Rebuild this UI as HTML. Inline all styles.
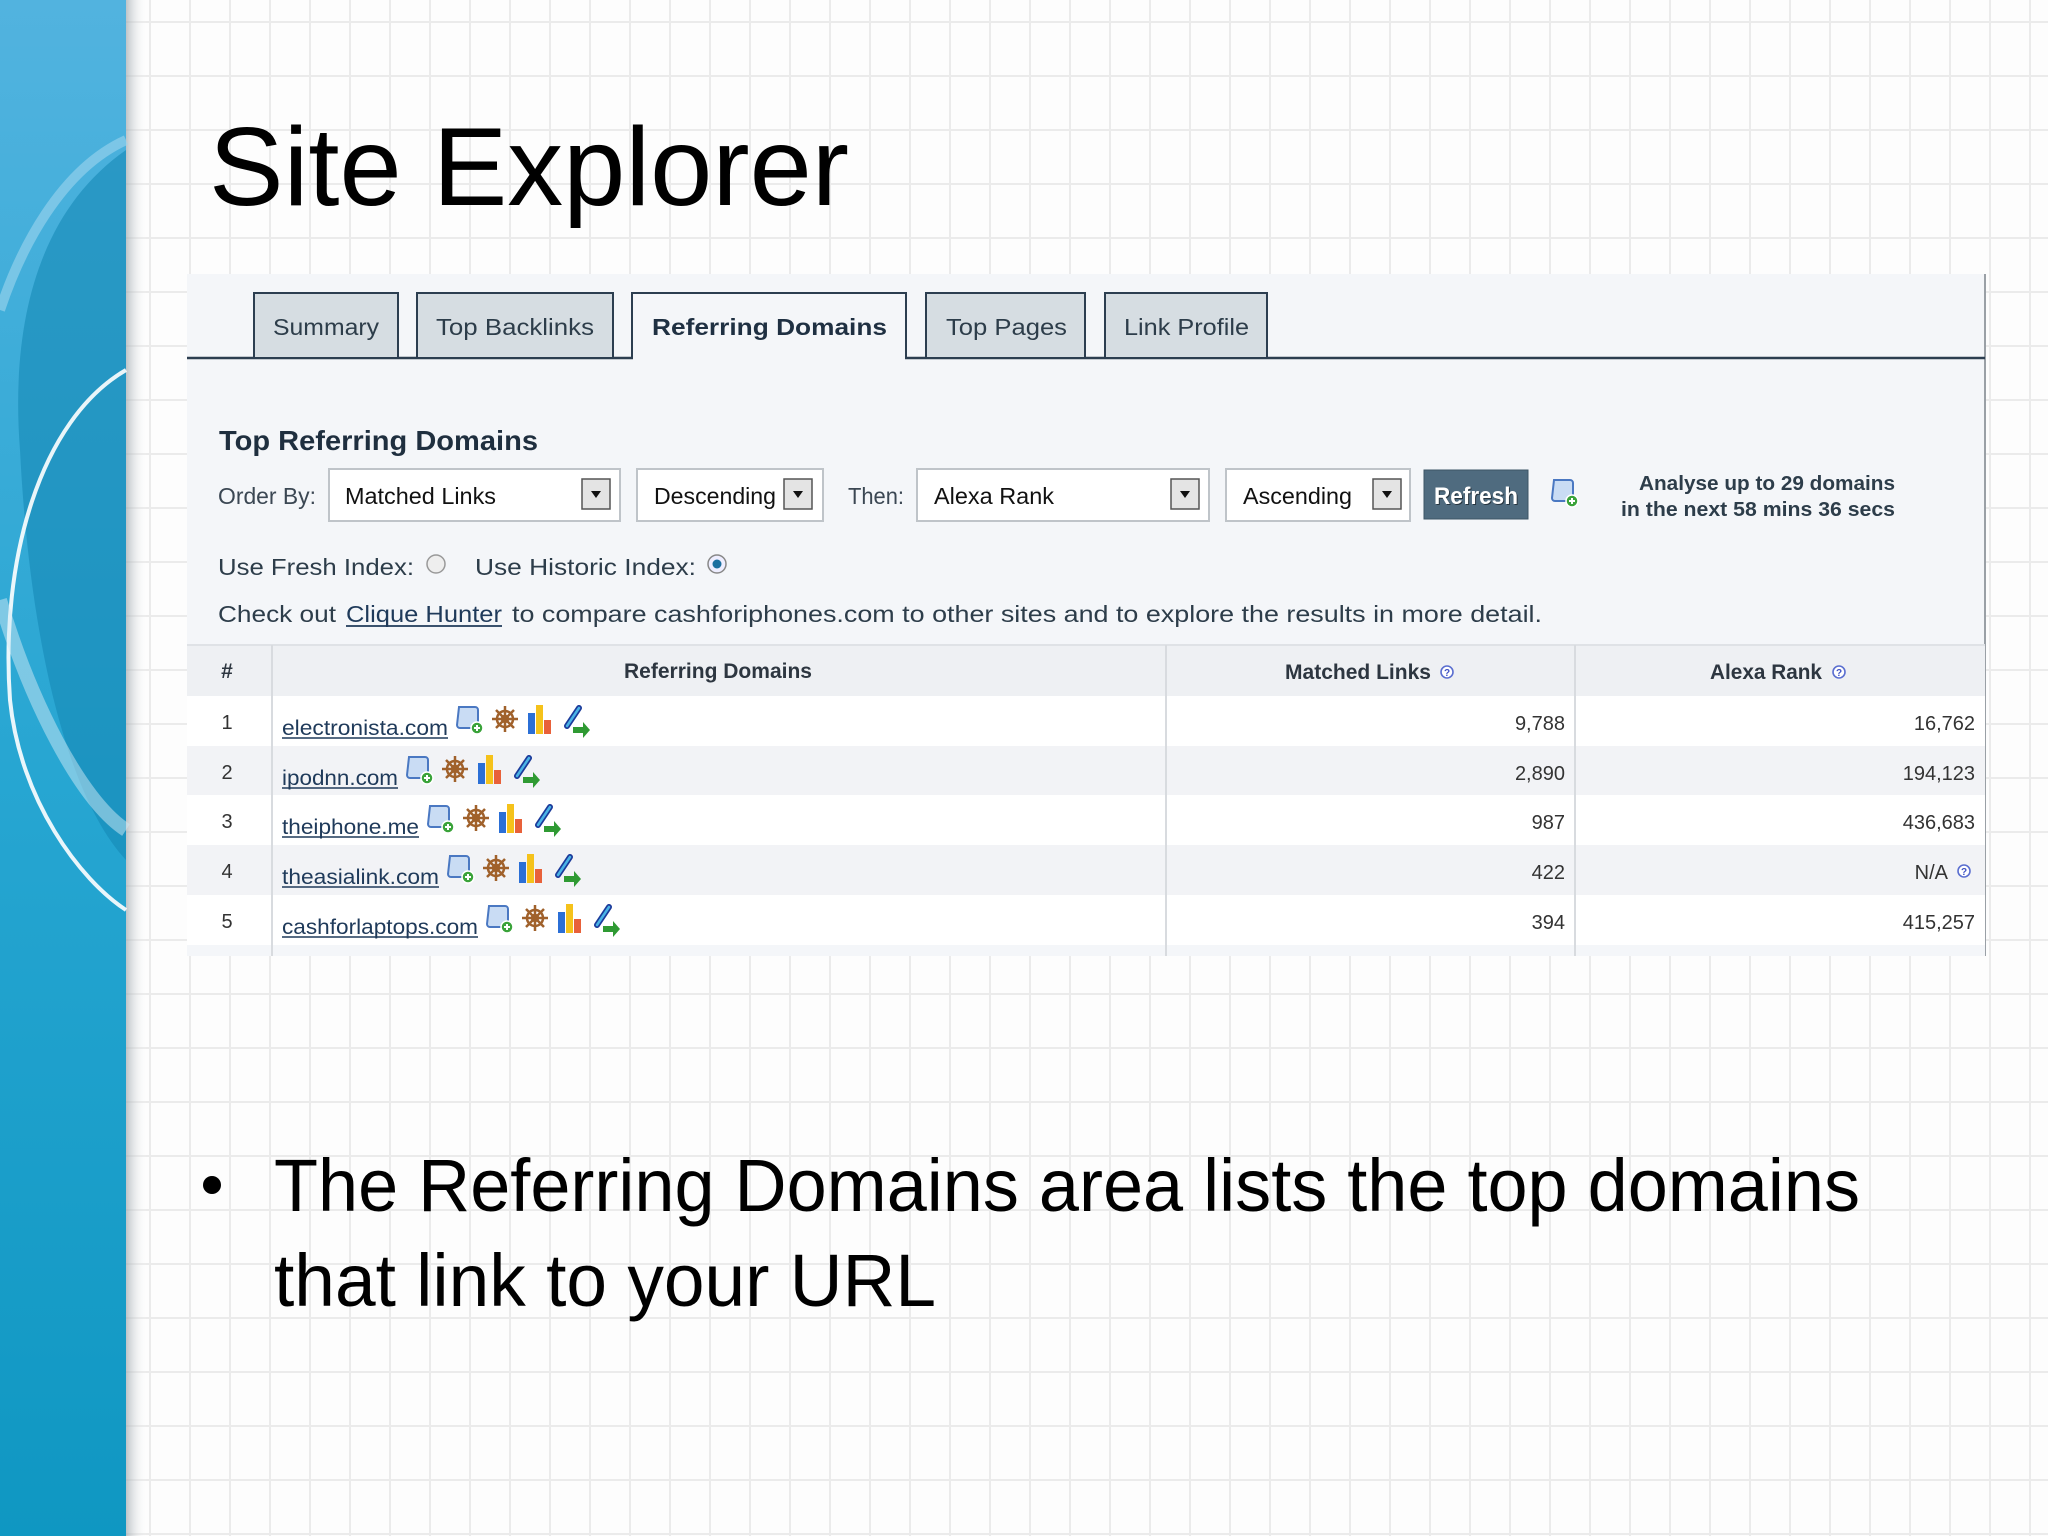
<!DOCTYPE html>
<html><head><meta charset="utf-8"><style>
html,body{margin:0;padding:0;width:2048px;height:1536px;overflow:hidden;background:#fff}
svg{display:block}
</style></head><body>
<svg width="2048" height="1536" viewBox="0 0 2048 1536" xmlns="http://www.w3.org/2000/svg" font-family="Liberation Sans, Arial, sans-serif">
<defs>
<pattern id="grid" x="29" y="21" width="40" height="54" patternUnits="userSpaceOnUse">
<rect width="40" height="54" fill="#fdfdfd"/>
<rect x="0" y="0" width="2" height="54" fill="#ebebeb"/>
<rect x="0" y="0" width="40" height="2" fill="#ebebeb"/>
</pattern>
<linearGradient id="band" x1="0" y1="0" x2="0" y2="1">
<stop offset="0" stop-color="#52b3df"/><stop offset="0.5" stop-color="#27a6d2"/><stop offset="1" stop-color="#0f97c2"/>
</linearGradient>
<linearGradient id="shad" x1="0" y1="0" x2="1" y2="0">
<stop offset="0" stop-color="#9aa4aa" stop-opacity="0.7"/><stop offset="1" stop-color="#fff" stop-opacity="0"/>
</linearGradient>
<g id="scroll">
<path d="M3 4 h16 a3 3 0 0 1 3 3 v18 h-18 a3 3 0 0 1 -3 -3 z" fill="#c9dcf4" stroke="#4a78c2" stroke-width="2"/>
<circle cx="21" cy="25" r="6" fill="#3aa33a" stroke="#fff" stroke-width="1.5"/>
<path d="M18 25h6M21 22v6" stroke="#fff" stroke-width="2"/>
</g>
<g id="wheel" stroke="#a0612b" fill="none" stroke-width="2.5">
<circle cx="13" cy="16" r="8"/><circle cx="13" cy="16" r="3" fill="#d7a36b"/>
<path d="M13 3v26M0 16h26M4 7l18 18M22 7l-18 18"/>
</g>
<g id="bars">
<rect x="1" y="10" width="7" height="21" fill="#2b6fd6"/>
<rect x="9" y="2" width="7" height="29" fill="#f5c21b"/>
<rect x="17" y="17" width="7" height="14" fill="#e8613a"/>
</g>
<g id="link">
<path d="M6 24 l12 -18" stroke="#1b3a9a" stroke-width="6" stroke-linecap="round" fill="none"/>
<path d="M6 24 l12 -18" stroke="#4ab3e6" stroke-width="2.5" stroke-linecap="round" fill="none"/>
<path d="M12 25h10v-5l7 8-7 8v-5h-10z" fill="#2f9a33"/>
</g>
<g id="q"><circle cx="7" cy="7" r="6" fill="#fff" stroke="#5b6fd0" stroke-width="1.6"/><text x="7" y="11" font-size="10" text-anchor="middle" fill="#3f52c4" font-weight="bold">?</text></g>
<g id="arr"><rect x="0" y="0" width="28" height="30" fill="#e4e4e4" stroke="#555" stroke-width="1.5"/><path d="M9 12h10l-5 7z" fill="#111"/></g>
</defs>

<rect width="2048" height="1536" fill="url(#grid)"/>
<rect x="125" y="0" width="22" height="1536" fill="url(#shad)"/>
<rect x="0" y="0" width="126" height="1536" fill="url(#band)"/>
<path d="M126 150 C40 210 10 320 20 450 C30 650 70 800 126 860 Z" fill="#1688b6" opacity="0.6"/>
<path d="M126 140 C60 170 20 250 0 310" stroke="#9fd6ee" stroke-width="10" fill="none" opacity="0.6"/>
<path d="M126 370 C40 420 0 560 10 700 C20 800 80 880 126 910" stroke="#ffffff" stroke-width="4" fill="none" opacity="0.9"/>
<path d="M0 600 C30 700 80 800 126 830" stroke="#cfeaf6" stroke-width="14" fill="none" opacity="0.5"/>

<text x="209" y="205" font-size="111" fill="#000" textLength="640" lengthAdjust="spacingAndGlyphs">Site Explorer</text>

<rect x="187" y="274" width="1798" height="682" fill="#f4f6f9"/>
<line x1="1985" y1="274" x2="1985" y2="956" stroke="#9aa0a6" stroke-width="2"/>
<line x1="187" y1="358" x2="1985" y2="358" stroke="#2c3e50" stroke-width="2.5"/>
<g stroke="#2c3e50" stroke-width="2" fill="#d6dde2">
<rect x="254" y="293" width="144" height="65"/>
<rect x="417" y="293" width="196" height="65"/>
<rect x="926" y="293" width="159" height="65"/>
<rect x="1105" y="293" width="162" height="65"/>
</g>
<path d="M632 359 V293 H906 V359" fill="#f4f6f9" stroke="#2c3e50" stroke-width="2"/>
<rect x="633" y="356" width="272" height="5" fill="#f4f6f9"/>
<g font-size="23" fill="#2d3d4a">
<text x="273" y="335" textLength="106" lengthAdjust="spacingAndGlyphs">Summary</text>
<text x="436" y="335" textLength="158" lengthAdjust="spacingAndGlyphs">Top Backlinks</text>
<text x="652" y="335" textLength="235" lengthAdjust="spacingAndGlyphs" font-weight="bold" fill="#1f3042">Referring Domains</text>
<text x="946" y="335" textLength="121" lengthAdjust="spacingAndGlyphs">Top Pages</text>
<text x="1124" y="335" textLength="125" lengthAdjust="spacingAndGlyphs">Link Profile</text>
</g>

<text x="219" y="450" font-size="28" font-weight="bold" fill="#1f2f3f" textLength="319" lengthAdjust="spacingAndGlyphs">Top Referring Domains</text>

<g fill="#fff" stroke="#bfc4c9" stroke-width="2">
<rect x="329" y="469" width="291" height="52"/>
<rect x="637" y="469" width="186" height="52"/>
<rect x="917" y="469" width="292" height="52"/>
<rect x="1226" y="469" width="184" height="52"/>
</g>
<use href="#arr" x="582" y="479"/>
<use href="#arr" x="784" y="479"/>
<use href="#arr" x="1171" y="479"/>
<use href="#arr" x="1373" y="479"/>
<g font-size="23" fill="#111">
<text x="218" y="504" fill="#3b4753" textLength="98" lengthAdjust="spacingAndGlyphs">Order By:</text>
<text x="345" y="504" textLength="151" lengthAdjust="spacingAndGlyphs">Matched Links</text>
<text x="654" y="504" textLength="122" lengthAdjust="spacingAndGlyphs">Descending</text>
<text x="848" y="504" fill="#3b4753" textLength="56" lengthAdjust="spacingAndGlyphs">Then:</text>
<text x="934" y="504" textLength="120" lengthAdjust="spacingAndGlyphs">Alexa Rank</text>
<text x="1243" y="504" textLength="109" lengthAdjust="spacingAndGlyphs">Ascending</text>
</g>
<rect x="1424" y="470" width="104" height="49" fill="#4f6b7f" stroke="#3d5566" stroke-width="1"/>
<text x="1435" y="505" font-size="24" font-weight="bold" fill="#000" opacity="0.5" textLength="84" lengthAdjust="spacingAndGlyphs">Refresh</text>
<text x="1434" y="504" font-size="24" font-weight="bold" fill="#fff" textLength="84" lengthAdjust="spacingAndGlyphs">Refresh</text>
<use href="#scroll" x="1551" y="476"/>
<g font-size="20" font-weight="bold" fill="#2d3d4a">
<text x="1639" y="490" textLength="256" lengthAdjust="spacingAndGlyphs">Analyse up to 29 domains</text>
<text x="1621" y="516" textLength="274" lengthAdjust="spacingAndGlyphs">in the next 58 mins 36 secs</text>
</g>

<g font-size="23" fill="#2d3d4a">
<text x="218" y="575" textLength="196" lengthAdjust="spacingAndGlyphs">Use Fresh Index:</text>
<text x="475" y="575" textLength="221" lengthAdjust="spacingAndGlyphs">Use Historic Index:</text>
</g>
<circle cx="436" cy="564" r="9" fill="#eee" stroke="#999" stroke-width="1.5"/>
<circle cx="717" cy="564" r="9" fill="#eef" stroke="#888" stroke-width="1.5"/>
<circle cx="717" cy="564" r="4.5" fill="#1a6fa0"/>
<g font-size="23" fill="#2d3d4a">
<text x="218" y="622" textLength="118" lengthAdjust="spacingAndGlyphs">Check out</text>
<text x="346" y="622" textLength="156" lengthAdjust="spacingAndGlyphs" fill="#1f3a5a">Clique Hunter</text>
<text x="512" y="622" textLength="1030" lengthAdjust="spacingAndGlyphs">to compare cashforiphones.com to other sites and to explore the results in more detail.</text>
</g>
<line x1="346" y1="626" x2="502" y2="626" stroke="#1f3a5a" stroke-width="1.8"/>

<rect x="187" y="645" width="1798" height="51" fill="#eef0f3"/>
<line x1="187" y1="645" x2="1985" y2="645" stroke="#dfe2e6" stroke-width="2"/>
<rect x="187" y="696" width="1798" height="50" fill="#ffffff"/>
<rect x="187" y="746" width="1798" height="49" fill="#f2f3f6"/>
<rect x="187" y="795" width="1798" height="50" fill="#ffffff"/>
<rect x="187" y="845" width="1798" height="50" fill="#f2f3f6"/>
<rect x="187" y="895" width="1798" height="50" fill="#ffffff"/>
<rect x="187" y="945" width="1798" height="11" fill="#f4f6f9"/>
<g stroke="#d8dbdf" stroke-width="2">
<line x1="272" y1="645" x2="272" y2="956"/>
<line x1="1166" y1="645" x2="1166" y2="956"/>
<line x1="1575" y1="645" x2="1575" y2="956"/>
</g>
<g font-size="21" font-weight="bold" fill="#2d3640">
<text x="227" y="678" text-anchor="middle">#</text>
<text x="624" y="678" textLength="188" lengthAdjust="spacingAndGlyphs">Referring Domains</text>
<text x="1285" y="679" textLength="146" lengthAdjust="spacingAndGlyphs">Matched Links</text>
<text x="1710" y="679" textLength="112" lengthAdjust="spacingAndGlyphs">Alexa Rank</text>
</g>
<use href="#q" x="1440" y="665"/>
<use href="#q" x="1832" y="665"/>

<g font-size="20" fill="#333" text-anchor="middle">
<text x="227" y="729">1</text><text x="227" y="779">2</text><text x="227" y="828">3</text><text x="227" y="878">4</text><text x="227" y="928">5</text>
</g>
<g font-size="21" fill="#1f3a5a">
<text x="282" y="735" textLength="166" lengthAdjust="spacingAndGlyphs">electronista.com</text>
<text x="282" y="785" textLength="116" lengthAdjust="spacingAndGlyphs">ipodnn.com</text>
<text x="282" y="834" textLength="137" lengthAdjust="spacingAndGlyphs">theiphone.me</text>
<text x="282" y="884" textLength="157" lengthAdjust="spacingAndGlyphs">theasialink.com</text>
<text x="282" y="934" textLength="196" lengthAdjust="spacingAndGlyphs">cashforlaptops.com</text>
</g>
<g stroke="#1f3a5a" stroke-width="1.6">
<line x1="282" y1="738" x2="448" y2="738"/>
<line x1="282" y1="788" x2="398" y2="788"/>
<line x1="282" y1="837" x2="419" y2="837"/>
<line x1="282" y1="887" x2="439" y2="887"/>
<line x1="282" y1="937" x2="478" y2="937"/>
</g>
<g>
<use href="#scroll" x="456" y="703"/><use href="#wheel" x="492" y="703"/><use href="#bars" x="527" y="703"/><use href="#link" x="561" y="702"/>
<use href="#scroll" x="406" y="753"/><use href="#wheel" x="442" y="753"/><use href="#bars" x="477" y="753"/><use href="#link" x="511" y="752"/>
<use href="#scroll" x="427" y="802"/><use href="#wheel" x="463" y="802"/><use href="#bars" x="498" y="802"/><use href="#link" x="532" y="801"/>
<use href="#scroll" x="447" y="852"/><use href="#wheel" x="483" y="852"/><use href="#bars" x="518" y="852"/><use href="#link" x="552" y="851"/>
<use href="#scroll" x="486" y="902"/><use href="#wheel" x="522" y="902"/><use href="#bars" x="557" y="902"/><use href="#link" x="591" y="901"/>
</g>
<g font-size="20" fill="#333" text-anchor="end">
<text x="1565" y="730">9,788</text><text x="1565" y="780">2,890</text><text x="1565" y="829">987</text><text x="1565" y="879">422</text><text x="1565" y="929">394</text>
<text x="1975" y="730">16,762</text><text x="1975" y="780">194,123</text><text x="1975" y="829">436,683</text><text x="1948" y="879">N/A</text><text x="1975" y="929">415,257</text>
</g>
<use href="#q" x="1957" y="864"/>

<circle cx="212" cy="1185" r="9" fill="#000"/>
<g font-size="74" fill="#000">
<text x="274" y="1211" textLength="1586" lengthAdjust="spacingAndGlyphs">The Referring Domains area lists the top domains</text>
<text x="274" y="1306" textLength="662" lengthAdjust="spacingAndGlyphs">that link to your URL</text>
</g>
</svg>
</body></html>
